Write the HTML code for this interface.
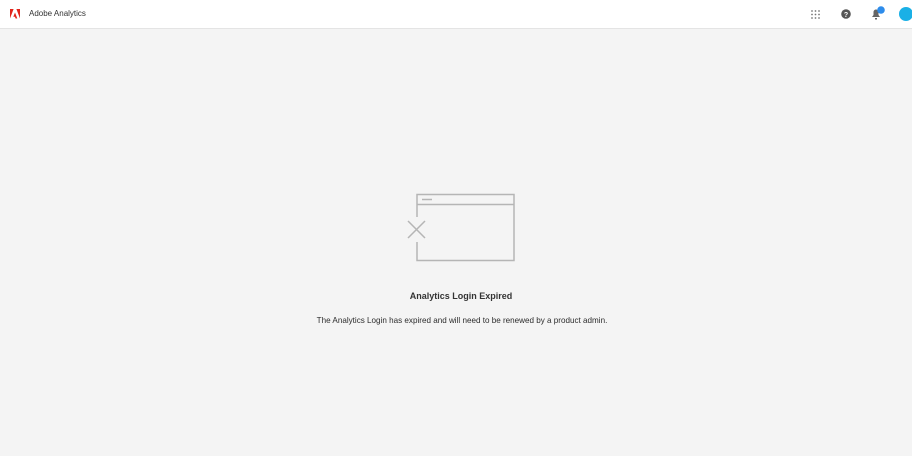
<!DOCTYPE html>
<html><head><style>
body{margin:0;width:912px;height:456px;background:#f4f4f4;font-family:"Liberation Sans",sans-serif;overflow:hidden;position:relative}
.hdr{position:absolute;left:0;top:0;width:912px;height:28px;background:#fff;border-bottom:1px solid #e4e4e4}
.t{position:absolute;left:29px;top:9px;font-size:8px;color:#333}
.h{position:absolute;width:912px;text-align:center;color:#2c2c2c}
</style></head><body>
<div class="hdr">
<svg style="position:absolute;left:10px;top:9px" width="10" height="10" viewBox="0 0 10 10"><path d="M3.6 0H0V9.5z M6.4 0H10V9.5z M5 3.5L7.3 9.5H5.6L4.9 7.8H3.3z" fill="#e1251b"/></svg>
<div class="t">Adobe Analytics</div>
<svg style="position:absolute;left:811px;top:10px" width="9" height="9"><g fill="#777"><circle cx="1" cy="1" r="0.9"/><circle cx="4.5" cy="1" r="0.9"/><circle cx="8" cy="1" r="0.9"/><circle cx="1" cy="4.5" r="0.9"/><circle cx="4.5" cy="4.5" r="0.9"/><circle cx="8" cy="4.5" r="0.9"/><circle cx="1" cy="8" r="0.9"/><circle cx="4.5" cy="8" r="0.9"/><circle cx="8" cy="8" r="0.9"/></g></svg>
<svg style="position:absolute;left:841px;top:9px" width="10" height="10"><circle cx="5" cy="5" r="4.8" fill="#555"/><text x="5" y="8" font-size="7" fill="#fff" text-anchor="middle" font-weight="bold" font-family="Liberation Sans">?</text></svg>
<svg style="position:absolute;left:870px;top:6px" width="16" height="14"><path d="M2 11h8l-1.5-2V6a2.5 2.5 0 0 0-5 0v3z M5 12h2v1.5H5z" fill="#666"/><circle cx="11" cy="4" r="3.8" fill="#2d8ceb"/></svg>
<div style="position:absolute;left:899px;top:7px;width:14px;height:14px;border-radius:50%;background:#1ab0e6"></div>
</div>
<svg style="position:absolute;left:400px;top:185px" width="125" height="85"><g fill="none" stroke="#b5b5b5" stroke-width="1.5"><path d="M17 32V9.5h97v66H17V57"/><path d="M17 19.5h97"/><path d="M22 14.5h10" /><path d="M8 36l17 17M25 36L8 53"/></g></svg>
<div class="h" style="top:291px;font-size:9px;left:5px;font-weight:bold;color:#333">Analytics Login Expired</div>
<div class="h" style="top:316px;font-size:8.1px;left:6px">The Analytics Login has expired and will need to be renewed by a product admin.</div>
</body></html>
